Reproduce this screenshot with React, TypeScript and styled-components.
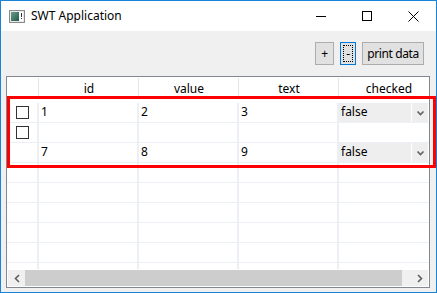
import styled, { createGlobalStyle } from "styled-components";

const GlobalStyle = createGlobalStyle`
	html, body {
		margin: 0;
		padding: 0;
		background: #ffffff;
	}
	body {
		font-family: "Noto Sans", "Open Sans", sans-serif;
		font-size: 12px;
		color: #000000;
	}
`;

const Window = styled.div`
	position: relative;
	width: 437px;
	height: 293px;
	box-sizing: border-box;
	border: 1px solid #1883d7;
	display: flex;
	flex-direction: column;
	background: #f0f0f0;
	overflow: hidden;
`;

const TitleBar = styled.div`
	height: 30px;
	flex: none;
	background: #ffffff;
	display: flex;
	align-items: center;
`;

const AppIcon = styled.svg`
	margin-left: 8px;
	margin-right: 6px;
	flex: none;
`;

const Title = styled.span`
	flex: 1;
	font-size: 12px;
	line-height: 30px;
	padding-bottom: 1px;
`;

const CaptionButton = styled.div`
	width: 46px;
	height: 30px;
	display: flex;
	align-items: center;
	justify-content: center;
`;

const Body = styled.div`
	flex: 1;
	display: flex;
	flex-direction: column;
	padding: 11px 6px 4px 5px;
	gap: 11px;
	min-height: 0;
`;

const Toolbar = styled.div`
	display: flex;
	justify-content: flex-end;
	gap: 6px;
	padding-right: 6px;
	height: 23px;
`;

const PushButton = styled.button<{ $focused?: boolean; $w: number }>`
	width: ${(p) => p.$w}px;
	height: 23px;
	box-sizing: border-box;
	padding: 0;
	margin: 0;
	background: #e1e1e1;
	border: 1px solid ${(p) => (p.$focused ? "#0078d7" : "#adadad")};
	font-family: "Noto Sans", sans-serif;
	font-size: 12px;
	letter-spacing: -0.4px;
	color: #000;
	position: relative;
	display: flex;
	align-items: center;
	justify-content: center;
	line-height: 1;
	&::after {
		content: "";
		display: ${(p) => (p.$focused ? "block" : "none")};
		position: absolute;
		inset: 2px;
		border: 1px dotted #000;
	}
`;

const TableFrame = styled.div`
	height: 212px;
	box-sizing: border-box;
	border: 1px solid #828790;
	background: #ffffff;
	display: flex;
	flex-direction: column;
`;

const Viewport = styled.div`
	height: 192px;
	overflow: hidden;
`;

const Row = styled.div<{ $header?: boolean }>`
	display: grid;
	grid-template-columns: 32px repeat(4, 100px);
	height: ${(p) => (p.$header ? 26 : 20)}px;
	box-sizing: border-box;
	border-bottom: 1px solid ${(p) => (p.$header ? "transparent" : "#eceff4")};
`;

const HeadCell = styled.div`
	position: relative;
	display: flex;
	align-items: center;
	justify-content: center;
	padding-bottom: 2px;
	&::after {
		content: "";
		position: absolute;
		right: 0;
		top: 1px;
		height: 18px;
		width: 1px;
		background: #e5e5e5;
	}
`;

const Cell = styled.div`
	display: flex;
	align-items: center;
	padding-left: 2px;
	padding-bottom: 2px;
	border-right: 2px solid #eceff4;
	overflow: hidden;
	white-space: nowrap;
`;

const CheckCell = styled(Cell)`
	padding-left: 0;
	padding-bottom: 0;
	justify-content: center;
`;

const CheckBox = styled.div`
	width: 13px;
	height: 13px;
	box-sizing: border-box;
	border: 1px solid #333333;
	background: #ffffff;
`;

const Combo = styled.div`
	width: 89px;
	height: 19px;
	margin-left: -2px;
	margin-bottom: -2px;
	display: flex;
	background: #eeeeee;
`;

const ComboText = styled.span`
	flex: 1;
	padding-left: 2px;
	display: flex;
	align-items: center;
	padding-bottom: 2px;
`;

const ComboButton = styled.div`
	width: 16px;
	border-left: 1px solid #ffffff;
	display: flex;
	align-items: center;
	justify-content: center;
`;

const ScrollBar = styled.div`
	height: 16px;
	margin: 1px 1px 0 1px;
	display: flex;
	background: #f0f0f0;
`;

const ArrowButton = styled.div`
	width: 17px;
	display: flex;
	align-items: center;
	justify-content: center;
	flex: none;
`;

const Track = styled.div`
	flex: 1;
	display: flex;
`;

const Thumb = styled.div`
	width: 377px;
	background: #cdcdcd;
`;

const Highlight = styled.div`
	position: absolute;
	left: 6px;
	top: 95px;
	width: 429px;
	height: 72px;
	box-sizing: border-box;
	border: 3px solid #ff0000;
	pointer-events: none;
`;

const Chevron = () => (
	<svg width="9" height="6" viewBox="0 0 9 6">
		<polyline points="1.5,1.5 4.5,4.5 7.5,1.5" fill="none" stroke="#606060" strokeWidth="1.6" />
	</svg>
);

interface RowData {
	check: boolean;
	id: string;
	value: string;
	text: string;
	checked?: string;
}

const rows: RowData[] = [
	{ check: true, id: "1", value: "2", text: "3", checked: "false" },
	{ check: true, id: "", value: "", text: "" },
	{ check: false, id: "7", value: "8", text: "9", checked: "false" },
	{ check: false, id: "", value: "", text: "" },
	{ check: false, id: "", value: "", text: "" },
	{ check: false, id: "", value: "", text: "" },
	{ check: false, id: "", value: "", text: "" },
	{ check: false, id: "", value: "", text: "" },
	{ check: false, id: "", value: "", text: "" },
];

function App() {
	return (
		<>
			<GlobalStyle />
			<Window>
				<TitleBar>
					<AppIcon width="16" height="13" viewBox="0 0 16 13">
						<defs>
							<linearGradient id="scr" x1="0" y1="0" x2="1" y2="1">
								<stop offset="0" stopColor="#6f9a8c" />
								<stop offset="1" stopColor="#1f5a4a" />
							</linearGradient>
						</defs>
						<rect x="0.5" y="0.5" width="15" height="12" fill="#e8e8e8" stroke="#8a8a8a" />
						<rect x="2" y="2" width="8" height="9" fill="url(#scr)" />
						<rect x="10" y="2" width="4" height="9" fill="#ffffff" />
						<rect x="12" y="3" width="1" height="4" fill="#333" />
						<rect x="12" y="8" width="1" height="1" fill="#333" />
					</AppIcon>
					<Title>SWT Application</Title>
					<CaptionButton>
						<svg width="10" height="10" viewBox="0 0 10 10">
							<line x1="0" y1="5.5" x2="10" y2="5.5" stroke="#000" strokeWidth="1" />
						</svg>
					</CaptionButton>
					<CaptionButton>
						<svg width="10" height="10" viewBox="0 0 10 10">
							<rect x="0.5" y="0.5" width="9" height="9" fill="none" stroke="#000" strokeWidth="1" />
						</svg>
					</CaptionButton>
					<CaptionButton>
						<svg width="11" height="11" viewBox="0 0 11 11">
							<line x1="0.5" y1="0.5" x2="10.5" y2="10.5" stroke="#000" strokeWidth="1" />
							<line x1="10.5" y1="0.5" x2="0.5" y2="10.5" stroke="#000" strokeWidth="1" />
						</svg>
					</CaptionButton>
				</TitleBar>
				<Body>
					<Toolbar>
						<PushButton $w={19}>+</PushButton>
						<PushButton $w={16} $focused>-</PushButton>
						<PushButton $w={62}>print data</PushButton>
					</Toolbar>
					<TableFrame>
						<Viewport>
							<Row $header>
								<HeadCell />
								<HeadCell>id</HeadCell>
								<HeadCell>value</HeadCell>
								<HeadCell>text</HeadCell>
								<HeadCell>checked</HeadCell>
							</Row>
							{rows.map((r, i) => (
								<Row key={i}>
									<CheckCell>{r.check && <CheckBox />}</CheckCell>
									<Cell>{r.id}</Cell>
									<Cell>{r.value}</Cell>
									<Cell>{r.text}</Cell>
									<Cell>
										{r.checked && (
											<Combo>
												<ComboText>{r.checked}</ComboText>
												<ComboButton>
													<Chevron />
												</ComboButton>
											</Combo>
										)}
									</Cell>
								</Row>
							))}
						</Viewport>
						<ScrollBar>
							<ArrowButton>
								<svg width="6" height="9" viewBox="0 0 6 9">
									<polyline points="5,1 1.5,4.5 5,8" fill="none" stroke="#606060" strokeWidth="1.6" />
								</svg>
							</ArrowButton>
							<Track>
								<Thumb />
							</Track>
							<ArrowButton>
								<svg width="6" height="9" viewBox="0 0 6 9">
									<polyline points="1,1 4.5,4.5 1,8" fill="none" stroke="#606060" strokeWidth="1.6" />
								</svg>
							</ArrowButton>
						</ScrollBar>
					</TableFrame>
				</Body>
				<Highlight />
			</Window>
		</>
	);
}

export default App;
